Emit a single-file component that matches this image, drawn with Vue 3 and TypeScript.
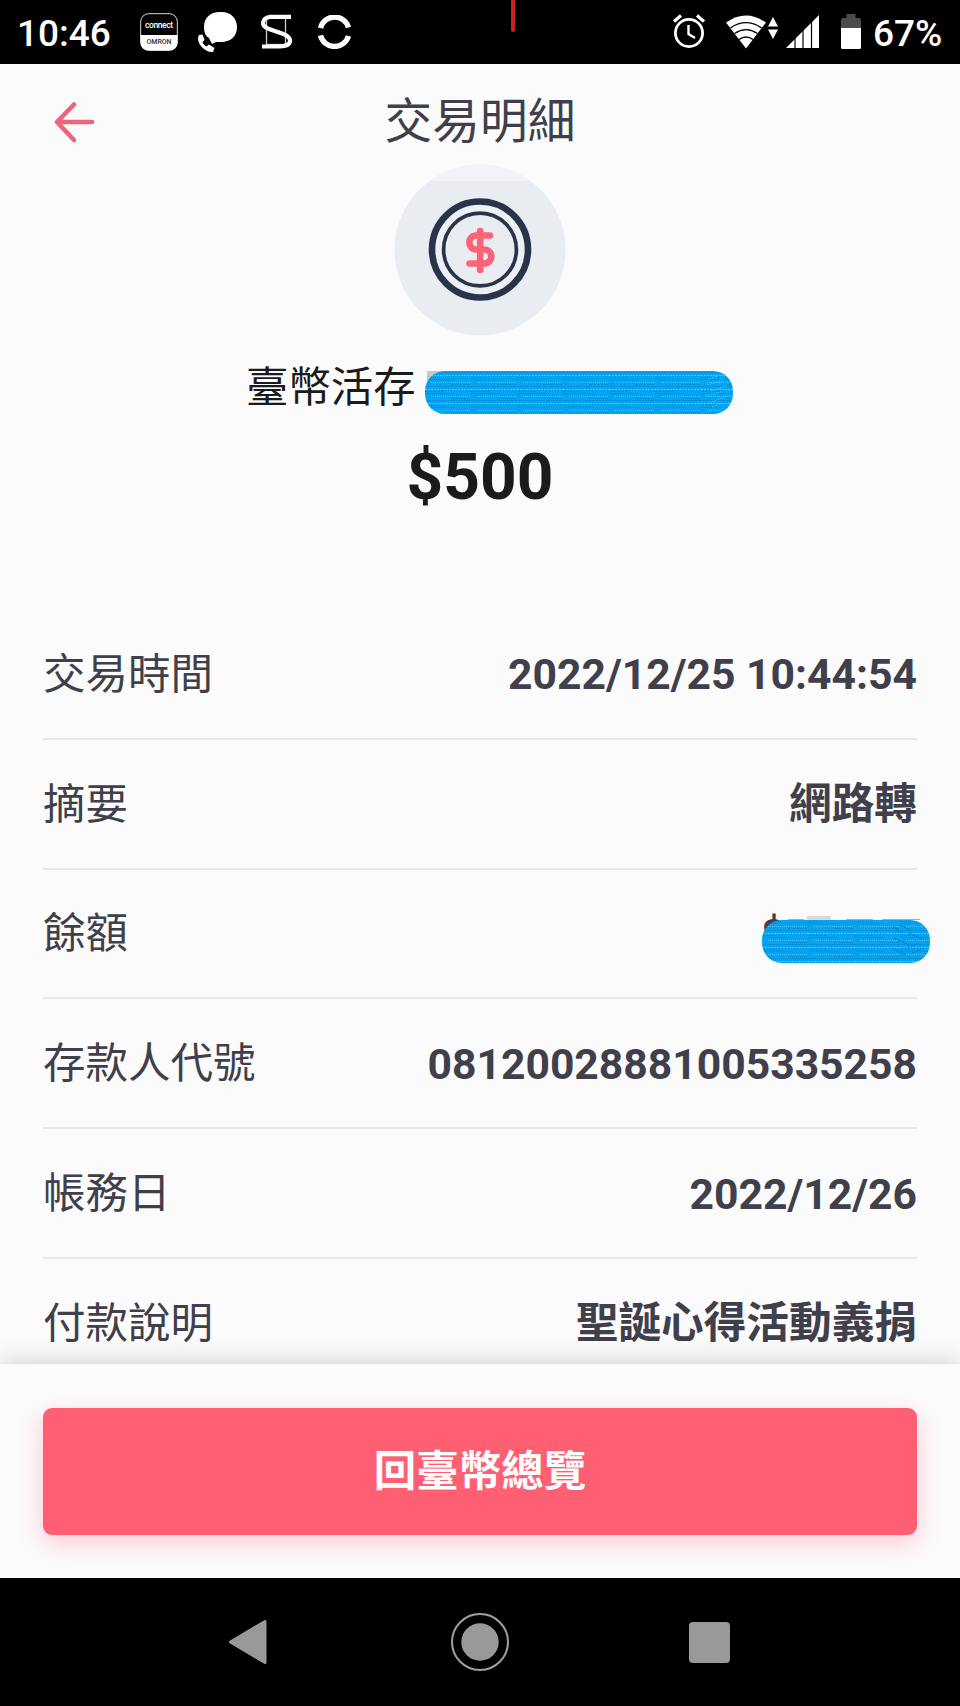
<script setup lang="ts">
interface DetailRow {
  label: string
  value: string
  masked?: boolean
  cjk?: boolean
}

const rows: DetailRow[] = [
  { label: '交易時間', value: '2022/12/25 10:44:54' },
  { label: '摘要', value: '網路轉', cjk: true },
  { label: '餘額', value: '$', masked: true },
  { label: '存款人代號', value: '08120028881005335258' },
  { label: '帳務日', value: '2022/12/26' },
  { label: '付款說明', value: '聖誕心得活動義捐', cjk: true },
]
</script>

<template>
  <div class="phone">
    <svg class="defs" width="0" height="0" aria-hidden="true">
      <defs>
        <pattern id="scribble" width="46" height="14" patternUnits="userSpaceOnUse">
          <rect width="46" height="14" fill="#05a3f0" />
          <path d="M0 1.5H46M0 8.5H30" stroke="#0793da" stroke-width="1" />
          <path d="M0 4.5H46" stroke="#4cc6fa" stroke-width="1" stroke-dasharray="2 1" />
          <path d="M6 11.5H46" stroke="#40c4fb" stroke-width="1" stroke-dasharray="1 1" />
          <path d="M0 6.5H20M26 13.5H46" stroke="#0890d8" stroke-width="1" stroke-dasharray="3 1" />
        </pattern>
      </defs>
    </svg>

    <header class="status">
      <span class="clock">10:46</span>
      <svg class="i-omron" width="38" height="38" viewBox="0 0 38 38">
        <rect x=".7" y=".7" width="36.6" height="36.6" rx="8" fill="#000" stroke="#ddd" stroke-width="1" />
        <path d="M.5 22H37.500V29.500A8 8 0 0 1 29.500 37.500H8.500A8 8 0 0 1 .5 29.500Z" fill="#fff" />
        <text x="19" y="15" text-anchor="middle" textLength="28" font-size="8.500" font-weight="500" fill="#fff">connect</text>
        <text x="19" y="31.300" text-anchor="middle" textLength="25" lengthAdjust="spacingAndGlyphs" font-size="6.800" font-weight="500" fill="#333">OMRON</text>
      </svg>
      <svg class="i-call" width="44" height="44" viewBox="0 0 44 44">
        <path d="M24 2C34 1 41 8 41 17C41 27 34 32 25 32H20L16 34L13 28C9 26 8 21 8 17C8 8 14 2 24 2Z" fill="#fff" />
        <path d="M3 25C-1 31 8 43 17 42L18.500 38L13 34.500L10.500 36.500C8 35 7 33.500 6.500 32L8.500 30L6.500 24.500Z" fill="#fff" />
      </svg>
      <svg class="i-s" width="34" height="36" viewBox="0 0 34 36">
        <rect x="6.500" y="4" width="19" height="26.500" fill="none" stroke="#ccc" stroke-width="1.300" />
        <path d="M31 2.800H10C2 4 0 12 9 15L22 19.500C34 24 32 32 20 32.500H2" fill="none" stroke="#fff" stroke-width="4.200" />
      </svg>
      <svg class="i-c" width="34" height="34" viewBox="0 0 34 34">
        <path d="M2.500 13A14.500 14.500 0 0 1 30.500 12.500M2.500 20.500A14.500 14.500 0 0 0 30.500 21" fill="none" stroke="#fff" stroke-width="5.300" />
      </svg>
      <span class="notch"></span>
      <svg class="i-alarm" width="34" height="36" viewBox="0 0 34 36">
        <circle cx="17" cy="20" r="13.600" fill="none" stroke="#fff" stroke-width="2.800" />
        <path d="M16.500 12V21L23 25" fill="none" stroke="#fff" stroke-width="2.400" />
        <path d="M2 8.500L9 2.500M32 8.500L25 2.500" stroke="#fff" stroke-width="3.200" />
      </svg>
      <svg class="i-wifi" width="54" height="36" viewBox="0 0 54 36">
        <path d="M0 8.500Q20-5.500 40 8.500L20 34.500Z" fill="#fff" />
        <path d="M4.500 13.800Q20 3.500 35.500 13.800M8.500 19.500Q20 11.800 31.500 19.500M13 25.500Q20 20.500 27 25.500" fill="none" stroke="#000" stroke-width="1.400" />
        <path d="M42 12.500L47 3L52 12.500ZM42 15.500H52L47 25Z" fill="#fff" />
      </svg>
      <svg class="i-signal" width="34" height="34" viewBox="0 0 34 34">
        <path d="M0 33L33 0V33Z" fill="#fff" />
        <path d="M9 33V22M17 33V14M25.500 33V6" stroke="#000" stroke-width="1.200" />
      </svg>
      <svg class="i-battery" width="20" height="36" viewBox="0 0 20 36">
        <path d="M0 6Q0 4 2 4H5.500V0H14.500V4H18Q20 4 20 6V15H0Z" fill="#4b4b4b" />
        <path d="M0 14H20V33.500Q20 35 18.500 35H1.500Q0 35 0 33.500Z" fill="#fff" />
      </svg>
      <span class="percent">67%</span>
    </header>

    <main class="content">
      <div class="title-bar">
        <svg class="back" width="44" height="44" viewBox="0 0 44 44">
          <path d="M39 22H4M21 4.500L4 22L21 40" fill="none" stroke="#ee6479" stroke-width="4.600" stroke-linecap="round" stroke-linejoin="round" />
        </svg>
        <h1>交易明細</h1>
      </div>

      <section class="summary">
        <svg class="coin" width="172" height="172" viewBox="0 0 172 172">
          <circle cx="86" cy="86" r="85.500" fill="#e9ecf1" />
          <path d="M35.500 17A85.500 85.500 0 0 1 136.500 17Z" fill="#f1f3f6" />
          <circle cx="86" cy="85.500" r="48" fill="#eceff4" stroke="#27344a" stroke-width="6.600" />
          <circle cx="86" cy="85.500" r="36.400" fill="#e9ecf1" stroke="#27344a" stroke-width="3.700" />
          <path d="M96 71.500H82.500C73 71.500 73 85.500 82.500 85.500H89.500C100 85.500 100 99.500 89.500 99.500H75.500M86.200 67V106" fill="none" stroke="#fa6378" stroke-width="6.600" stroke-linecap="round" stroke-linejoin="round" />
        </svg>
        <div class="account">
          <span>臺幣活存</span>
          <svg class="account-mask" width="308" height="43" viewBox="0 0 308 43">
            <rect x="2" width="22" height="10" fill="#c8c8c8" />
            <rect width="308" height="43" rx="20" fill="url(#scribble)" />
            <path d="M284 8l9-3M282 14l14-4M286 20l15-5M280 25l16-4M284 32l18-7M287 36l10-4" stroke="#3bbdf5" stroke-width="1" stroke-dasharray="2 1" />
          </svg>
        </div>
        <div class="amount">$500</div>
      </section>

      <dl class="details">
        <div v-for="row in rows" :key="row.label" class="row">
          <dt>{{ row.label }}</dt>
          <dd :class="{ masked: row.masked, cjk: row.cjk }">
            {{ row.value }}
            <svg v-if="row.masked" class="mask" width="168" height="48" viewBox="0 0 168 48">
              <rect x="45" y="1" width="24" height="4" fill="#d8d8da" />
              <path d="M26 4.500H42M84 4.500H111M120 4.500H158" stroke="#a3abb4" stroke-width="1" />
              <rect y="5" width="168" height="43" rx="20" fill="url(#scribble)" />
              <path d="M131 12l8 5M138 10l12 6M132 23l15 7M146 18l15 6M130 34l14 5M145 33l12-5M150 38l12-5" stroke="#087fbd" stroke-width="1" stroke-dasharray="3 1" />
            </svg>
          </dd>
        </div>
      </dl>
    </main>

    <footer class="action">
      <button type="button">回臺幣總覽</button>
    </footer>

    <nav class="nav">
      <svg width="40" height="46" viewBox="0 0 40 46">
        <path d="M37 2.500V43.500L2.500 23Z" fill="#999" stroke="#999" stroke-width="3" stroke-linejoin="round" />
      </svg>
      <svg class="home" width="60" height="60" viewBox="0 0 60 60">
        <circle cx="30" cy="30" r="28" fill="none" stroke="#a0a0a0" stroke-width="2" />
        <circle cx="30" cy="30" r="18.700" fill="#999" />
      </svg>
      <svg width="41" height="41" viewBox="0 0 41 41">
        <rect width="41" height="41" rx="4" fill="#999" />
      </svg>
    </nav>
  </div>
</template>

<style>
body {
  margin: 0;
  background: #fbfbfb;
}
</style>

<style scoped>
.phone {
  width: 960px;
  height: 1706px;
  display: flex;
  flex-direction: column;
  overflow: hidden;
  background: #fbfbfb;
  color: #3f404b;
  font-family: Roboto, "Noto Sans CJK TC", sans-serif;
}
.defs {
  position: absolute;
}
svg {
  display: block;
  flex: none;
}
.status {
  position: relative;
  height: 64px;
  flex: none;
  box-sizing: border-box;
  display: flex;
  align-items: flex-start;
  background: #000;
  color: #fff;
  font-size: 37px;
  font-weight: 500;
  line-height: 67px;
}
.clock {
  width: 123px;
  padding-left: 17px;
}
.i-omron {
  margin-top: 13px;
}
.i-call {
  margin: 10px 0 0 18px;
}
.i-s {
  margin: 14px 0 0 20px;
}
.i-c {
  margin: 15px 0 0 24px;
}
.notch {
  position: absolute;
  left: 511px;
  top: 0;
  width: 4px;
  height: 32px;
  border-radius: 0 0 2px 2px;
  background: #c62020;
}
.i-alarm {
  margin: 13px 0 0 auto;
}
.i-wifi {
  margin: 14px 0 0 20px;
}
.i-signal {
  margin: 15px 0 0 6px;
}
.i-battery {
  margin: 14px 0 0 21px;
}
.percent {
  width: 86px;
  padding-left: 12px;
  box-sizing: border-box;
  margin-right: 13px;
  white-space: nowrap;
}
.content {
  height: 1300px;
  flex: none;
  overflow: hidden;
}
.title-bar {
  height: 100px;
  display: grid;
  grid-template-columns: 1fr auto 1fr;
  align-items: center;
}
.back {
  margin: 16px 0 0 53px;
}
h1 {
  margin: 15px 0 0;
  font-size: 47.7px;
  font-weight: 400;
  line-height: 60px;
}
.summary {
  height: 446px;
  display: flex;
  flex-direction: column;
  align-items: center;
}
.account {
  display: flex;
  align-items: center;
  align-self: flex-start;
  margin: 20px 0 0 246px;
  height: 64px;
  color: #1b1b1b;
  font-size: 42.4px;
  line-height: 64px;
}
.account-mask {
  margin: 9px 0 0 9px;
}
.amount {
  margin-top: 18px;
  color: #1b1b1b;
  font-size: 64px;
  font-weight: 700;
  line-height: 80px;
}
.details {
  margin: 0 43px;
}
.row {
  height: 129.8px;
  box-sizing: border-box;
  display: flex;
  align-items: center;
  justify-content: space-between;
  border-bottom: 2px solid #e4e9ef;
  font-size: 42.5px;
  line-height: 60px;
}
.row:last-child {
  border-bottom-color: transparent;
}
dt {
  padding-top: 2px;
}
dd {
  margin: 0;
  padding-top: 1px;
  font-size: 42.67px;
  font-weight: 700;
}
.masked {
  position: relative;
  width: 157px;
  margin-right: -1px;
}
.mask {
  position: absolute;
  left: 1px;
  top: 12px;
}
.action {
  position: relative;
  height: 214px;
  flex: none;
  box-sizing: border-box;
  padding: 44px 43px 0;
  background: #fbfbfb;
  box-shadow: 0 0 26px rgba(0, 0, 0, 0.2);
}
button {
  display: block;
  width: 100%;
  height: 127px;
  padding: 0;
  border: 0;
  border-radius: 9px;
  background: #ff5f73;
  box-shadow: 0 8px 24px rgba(255, 70, 120, 0.28);
  color: #fff;
  font: inherit;
  font-size: 42.5px;
  font-weight: 700;
  line-height: 120px;
}
.nav {
  height: 128px;
  flex: none;
  box-sizing: border-box;
  padding: 0 230px 0 228px;
  display: flex;
  align-items: center;
  justify-content: space-between;
  background: #000;
}
.home {
  margin-left: 3px;
}
</style>
